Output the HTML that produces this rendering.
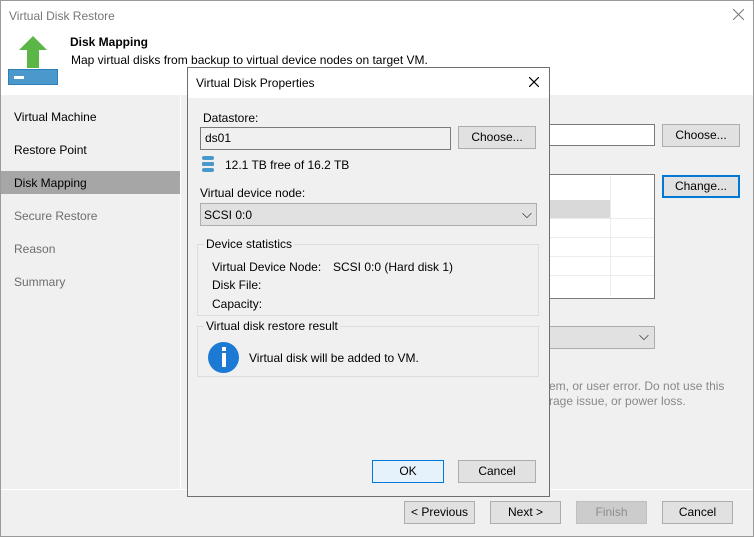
<!DOCTYPE html>
<html><head><style>
*{margin:0;padding:0;box-sizing:border-box}
body{width:754px;height:537px;position:relative;overflow:hidden;font-family:"Liberation Sans",sans-serif;font-size:12px;color:#000;background:#f0f0f0}
.a{position:absolute}
.btn{position:absolute;background:#e1e1e1;border:1px solid #adadad;text-align:center;line-height:20px;font-size:12px}
.t{position:absolute;white-space:nowrap}
</style></head><body>
<div class="a" style="left:0;top:0;width:754px;height:537px;border:1px solid #9a9a9a"></div>
<div class="a" style="left:1px;top:1px;width:752px;height:94px;background:#fff"></div>
<div class="t" style="left:9px;top:9px;color:#777;font-size:12px">Virtual Disk Restore</div>
<svg class="a" style="left:733px;top:9px" width="11" height="11"><path d="M0,0L11,11M11,0L0,11" stroke="#777" stroke-width="1"/></svg>
<svg class="a" style="left:18px;top:36px" width="30" height="33"><polygon points="15,0 29,14 21,14 21,33 9,33 9,14 1,14" fill="#5cb547"/></svg>
<div class="a" style="left:8px;top:69px;width:50px;height:16px;background:#4a98cc;border:1px solid #2e7fb8;outline:1px solid #fff"></div>
<div class="a" style="left:14px;top:76px;width:10px;height:3px;background:#fff"></div>
<div class="t" style="left:70px;top:35px;font-weight:bold;font-size:12px">Disk Mapping</div>
<div class="t" style="left:71px;top:53px;font-size:12px">Map virtual disks from backup to virtual device nodes on target VM.</div>
<div class="a" style="left:180px;top:95px;width:1px;height:394px;background:#fff"></div>
<div class="t" style="left:14px;top:110px">Virtual Machine</div>
<div class="t" style="left:14px;top:143px">Restore Point</div>
<div class="a" style="left:1px;top:171px;width:179px;height:23px;background:#a6a6a6"></div>
<div class="t" style="left:14px;top:176px">Disk Mapping</div>
<div class="t" style="left:14px;top:209px;color:#6d6d6d">Secure Restore</div>
<div class="t" style="left:14px;top:242px;color:#6d6d6d">Reason</div>
<div class="t" style="left:14px;top:275px;color:#6d6d6d">Summary</div>
<div class="a" style="left:549px;top:124px;width:106px;height:22px;background:#fff;border:1px solid #7a7a7a;border-left:none"></div>
<div class="btn" style="left:662px;top:124px;width:78px;height:23px">Choose...</div>
<div class="a" style="left:549px;top:174px;width:106px;height:125px;background:#fff;border:1px solid #7a7a7a;border-left:none"></div>
<div class="a" style="left:549px;top:200px;width:62px;height:19px;background:#d9d9d9"></div>
<div class="a" style="left:610px;top:176px;width:1px;height:120px;background:#e8eef8"></div>
<div class="a" style="left:549px;top:218px;width:105px;height:1px;background:#ececec"></div>
<div class="a" style="left:549px;top:237px;width:105px;height:1px;background:#ececec"></div>
<div class="a" style="left:549px;top:256px;width:105px;height:1px;background:#ececec"></div>
<div class="a" style="left:549px;top:275px;width:105px;height:1px;background:#ececec"></div>
<div class="btn" style="left:662px;top:175px;width:78px;height:23px;border:2px solid #0078d7;line-height:19px">Change...</div>
<div class="a" style="left:549px;top:326px;width:106px;height:23px;background:#e1e1e1;border:1px solid #adadad;border-left:none"></div>
<div class="t" style="left:639px;top:328px;font-size:13px">⌵</div>
<div class="t" style="left:549px;top:379px;color:#888">em, or user error. Do not use this</div>
<div class="t" style="left:549px;top:394px;color:#888">rage issue, or power loss.</div>
<div class="a" style="left:1px;top:489px;width:752px;height:1px;background:#fff"></div>
<div class="btn" style="left:404px;top:501px;width:71px;height:23px">&lt; Previous</div>
<div class="btn" style="left:490px;top:501px;width:71px;height:23px">Next &gt;</div>
<div class="btn" style="left:576px;top:501px;width:71px;height:23px;background:#cccccc;border-color:#bfbfbf;color:#8d8d8d">Finish</div>
<div class="btn" style="left:662px;top:501px;width:71px;height:23px">Cancel</div>
<!-- dialog -->
<div class="a" style="left:187px;top:67px;width:363px;height:430px;background:#f0f0f0;border:1px solid #6f6f6f"></div>
<div class="a" style="left:188px;top:68px;width:361px;height:30px;background:#fff"></div>
<div class="t" style="left:196px;top:76px">Virtual Disk Properties</div>
<svg class="a" style="left:529px;top:77px" width="10" height="10"><path d="M0,0L10,10M10,0L0,10" stroke="#000" stroke-width="1.2"/></svg>
<div class="t" style="left:203px;top:111px">Datastore:</div>
<div class="a" style="left:200px;top:127px;width:251px;height:23px;background:#f0f0f0;border:1px solid #7a7a7a"></div>
<div class="t" style="left:205px;top:131px">ds01</div>
<div class="btn" style="left:458px;top:126px;width:78px;height:23px">Choose...</div>
<svg class="a" style="left:202px;top:156px" width="12" height="16"><rect x="0" y="0" width="12" height="4" rx="2" fill="#4a98cc"/><rect x="0" y="6" width="12" height="4" rx="1" fill="#4a98cc"/><rect x="0" y="12" width="12" height="4" rx="2" fill="#4a98cc"/></svg>
<div class="t" style="left:225px;top:158px">12.1 TB free of 16.2 TB</div>
<div class="t" style="left:200px;top:186px">Virtual device node:</div>
<div class="a" style="left:200px;top:203px;width:337px;height:23px;background:#e1e1e1;border:1px solid #adadad"></div>
<div class="t" style="left:204px;top:208px">SCSI 0:0</div>
<div class="t" style="left:522px;top:206px;font-size:13px">⌵</div>
<div class="a" style="left:197px;top:244px;width:342px;height:72px;border:1px solid #dcdcdc"></div>
<div class="t" style="left:204px;top:237px;background:#f0f0f0;padding:0 2px">Device statistics</div>
<div class="t" style="left:212px;top:260px">Virtual Device Node:</div>
<div class="t" style="left:333px;top:260px">SCSI 0:0 (Hard disk 1)</div>
<div class="t" style="left:212px;top:278px">Disk File:</div>
<div class="t" style="left:212px;top:297px">Capacity:</div>
<div class="a" style="left:197px;top:326px;width:342px;height:51px;border:1px solid #dcdcdc"></div>
<div class="t" style="left:204px;top:319px;background:#f0f0f0;padding:0 2px">Virtual disk restore result</div>
<div class="a" style="left:208px;top:342px;width:31px;height:31px;border-radius:50%;background:#1c7ad4"></div>
<div class="a" style="left:222px;top:347px;width:4px;height:4px;background:#fff"></div>
<div class="a" style="left:222px;top:353px;width:4px;height:14px;background:#fff"></div>
<div class="t" style="left:249px;top:351px">Virtual disk will be added to VM.</div>
<div class="btn" style="left:372px;top:460px;width:72px;height:23px;background:#e5f1fb;border-color:#0078d7">OK</div>
<div class="btn" style="left:458px;top:460px;width:78px;height:23px">Cancel</div>
</body></html>
